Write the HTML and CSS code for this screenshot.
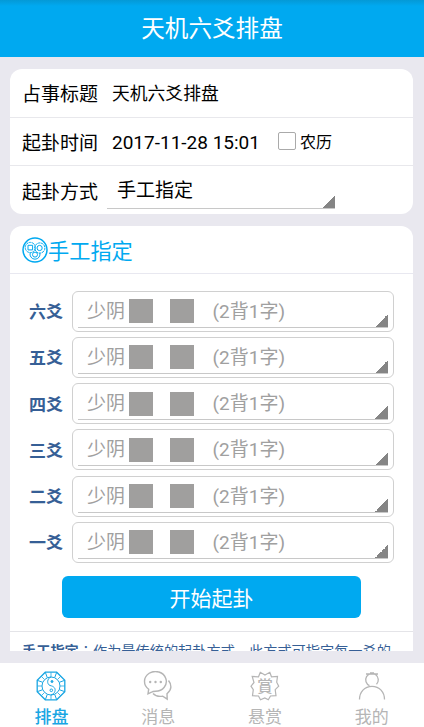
FILE: index.html
```
<!DOCTYPE html>
<html lang="zh-CN">
<head>
<meta charset="UTF-8" />
<meta name="viewport" content="width=device-width, initial-scale=1" />
<title>天机六爻排盘</title>
<link rel="stylesheet" href="styles.css">
</head>
<body>
  <header class="topbar">天机六爻排盘</header>

  <main class="content">
    <section class="card">
      <div class="row">
        <span class="label">占事标题</span>
        <span class="value title-value">天机六爻排盘</span>
      </div>
      <div class="row">
        <span class="label">起卦时间</span>
        <span class="value date-value">2017-11-28 15:01</span>
        <label class="lunar"><span class="box"></span>农历</label>
      </div>
      <div class="row">
        <span class="label">起卦方式</span>
        <span class="spinner mode">手工指定</span>
      </div>
    </section>

    <section class="card manual">
      <h2>
        <svg class="coins" viewBox="0 0 26 26" fill="none" stroke="currentColor">
          <circle cx="13" cy="13" r="12" stroke-width="1.5"/>
          <circle cx="8.3" cy="10.5" r="5.1" stroke-dasharray="2.5 .6"/>
          <circle cx="17.8" cy="11" r="5.1" stroke-dasharray="2.5 .6"/>
          <path d="M8.2 15.8a5 5 0 1 0 9.6 0"/>
          <path d="M6 8.3h4.6v4.6H6z"/>
          <circle cx="17.6" cy="11" r="2.6"/>
          <circle cx="13" cy="17.6" r="2.5"/>
        </svg>手工指定
      </h2>
      <div class="lines">
        <div class="line"><b>六爻</b><div class="field"><span class="spinner yao">少阴<i></i><i></i><em>(2背1字)</em></span></div></div>
        <div class="line"><b>五爻</b><div class="field"><span class="spinner yao">少阴<i></i><i></i><em>(2背1字)</em></span></div></div>
        <div class="line"><b>四爻</b><div class="field"><span class="spinner yao">少阴<i></i><i></i><em>(2背1字)</em></span></div></div>
        <div class="line"><b>三爻</b><div class="field"><span class="spinner yao">少阴<i></i><i></i><em>(2背1字)</em></span></div></div>
        <div class="line"><b>二爻</b><div class="field"><span class="spinner yao">少阴<i></i><i></i><em>(2背1字)</em></span></div></div>
        <div class="line"><b>一爻</b><div class="field"><span class="spinner yao">少阴<i></i><i></i><em>(2背1字)</em></span></div></div>
      </div>
      <button type="button" class="start">开始起卦</button>
      <p class="help"><b>手工指定</b><span class="colon" lang="zh-TW">：</span>作为最传统的起卦方式，此方式可指定每一爻的</p>
    </section>
  </main>

  <nav class="tabs">
    <a class="tab active">
      <svg viewBox="0 0 30 30" fill="none" stroke="currentColor">
        <path d="M9.300 1.200h11.400l8.100 8.100v11.400l-8.100 8.100H9.300l-8.100-8.100V9.300z" stroke-width="1.300"/>
        <circle cx="15" cy="15" r="9"/>
        <path d="M9.300 1.200l2 5.500M20.700 1.200l-2 5.500M28.800 9.300l-5.500 2M28.800 20.700l-5.500-2M20.700 28.800l-2-5.500M9.300 28.800l2-5.500M1.200 20.700l5.500-2M1.200 9.300l5.500 2"/>
        <path d="M15 1.500v4.500M15 24v4.500M1.500 15H6M24 15h4.500M5.500 5.500l3 3M24.500 5.500l-3 3M5.500 24.500l3-3M24.500 24.500l-3-3" opacity=".8"/>
        <path d="M15 6c-4 1.500-4.500 7-1 8.500 4 .8 6 3 4.800 6.200-.6 1.500-1.800 2.500-3.800 3.300"/>
        <circle cx="16" cy="10.500" r="1" fill="currentColor"/>
        <circle cx="15.300" cy="19.300" r="1.300"/>
      </svg>
      排盘
    </a>
    <a class="tab">
      <svg viewBox="0 0 30 30" fill="none" stroke="currentColor" stroke-width="1.400">
        <path d="M5.700 18.200A10.900 9.900 0 1 1 12.500 20.300c-2 0-3 .2-4 .9L5 22.800z"/>
        <path d="M25.500 9.500c3.200 3.800 3.700 9.200-1.500 13.200l.2 5.500-4.500-3c-4 .6-7.500-.2-9.700-2.700"/>
        <g fill="currentColor" stroke="none"><circle cx="7.200" cy="11" r="1.200"/><circle cx="12.500" cy="11" r="1.200"/><circle cx="17.800" cy="11" r="1.200"/></g>
      </svg>
      消息
    </a>
    <a class="tab">
      <svg viewBox="0 0 30 30" fill="none" stroke="currentColor" stroke-width="1.200">
        <path d="M15 4l4.800-2.700 1.700 4.500 6-.3-.8 5.700 2 4-3.500 3.500.8 6-5.500.3-2.200 3.800L14.800 27l-4.300 1.800-2-3.800-6-.3.800-6L1 15.200l3-3.700-1.800-6 6.300.3 1.800-4.500z"/>
        <text class="seal" x="15" y="20.500" text-anchor="middle">賞</text>
      </svg>
      悬赏
    </a>
    <a class="tab">
      <svg viewBox="0 0 30 30" fill="none" stroke="currentColor" stroke-width="1.300">
        <path d="M2.500 28.500c0-7.500 5-13.200 12.500-13.200s12.500 5.700 12.500 13.200"/>
        <path d="M12.500 14.600a6.300 6.300 0 1 1 7-1.400M9 3h12M13 1.800h4"/>
      </svg>
      我的
    </a>
  </nav>
</body>
</html>
```
FILE: styles.css
```
* {
  box-sizing: border-box;
}
body {
  margin: 0;
  height: 727px;
  display: flex;
  flex-direction: column;
  overflow: hidden;
  background-color: #e9e8ef;
  font-family: Roboto, "Noto Sans CJK SC", sans-serif;
  color: #000;
}

.topbar {
  flex: none;
  height: 57px;
  line-height: 59px;
  text-align: center;
  font-size: 23.6px;
  color: #fff;
  background: linear-gradient(#0499d6, #00a9f0 6px);
}

.content {
  height: 594px;
  flex: none;
  overflow: hidden;
  padding: 12px 11px 0 10px;
}

.card {
  background-color: #fff;
  border-radius: 12px;
  margin-bottom: 12px;
}

.row {
  display: flex;
  align-items: center;
  height: 48.5px;
  padding-left: 12px;
  border-bottom: 1px solid #e8e8ec;
}
.row:last-child {
  height: 48px;
  border-bottom: none;
}
.label {
  width: 90px;
  font-size: 19px;
}
.title-value {
  padding-bottom: 1px;
  font-size: 17.8px;
}
.date-value {
  width: 166px;
  padding-top: 2px;
  font-size: 19px;
}
.lunar {
  display: flex;
  align-items: center;
  gap: 4px;
  font-size: 16px;
}
.box {
  width: 18px;
  height: 18px;
  border: 1.5px solid #aaa;
  border-radius: 2px;
}

/* underlined dropdown with the small corner triangle */
.spinner {
  border-bottom: 1px solid #c8c8c8;
  background: linear-gradient(135deg, transparent 50%, #858585 50%) right bottom / 14px 14px no-repeat;
  background-origin: border-box;
}
.mode {
  width: 228px;
  height: 38px;
  line-height: 39px;
  margin-left: -5px;
  padding-left: 10px;
  font-size: 19px;
}

h2 {
  display: flex;
  align-items: center;
  height: 48px;
  margin: 0;
  padding-left: 12px;
  border-bottom: 1px solid #e8e8f0;
  font-size: 21.2px;
  font-weight: normal;
  color: #00a9f0;
}
.coins {
  width: 26px;
  height: 26px;
}

.lines {
  display: flex;
  flex-direction: column;
  gap: 5.3px;
  padding: 16.5px 19px 0;
}
.line {
  display: flex;
  align-items: center;
  height: 41px;
}
.line b {
  width: 43px;
  padding-bottom: 1px;
  font-size: 17px;
  color: #365f96;
}
.field {
  flex: 1;
  height: 41px;
  padding: 4px 5px;
  border: 1px solid #d0d0d0;
  border-radius: 6px;
}
.yao {
  display: flex;
  align-items: center;
  height: 32px;
  padding-left: 9px;
  font-size: 19px;
  line-height: 31px;
  color: #a0a0a0;
}
.yao i {
  width: 24px;
  height: 24px;
  margin-left: 4px;
  background-color: #a09f9e;
}
.yao i + i {
  margin-left: 17px;
}
.yao em {
  margin-left: 18.5px;
  font-style: normal;
}

.start {
  display: block;
  width: 299px;
  height: 42px;
  margin: 13.5px 0 13px 52px;
  padding: 0;
  border: none;
  border-radius: 6px;
  background-color: #00a9f0;
  color: #fff;
  font-family: inherit;
  font-size: 21px;
}

.help {
  margin: 0;
  padding: 8px 12px;
  border-top: 1px solid #e4e4e8;
  font-size: 14.2px;
  line-height: 20px;
  color: #365f96;
  white-space: nowrap;
}
.colon {
  font-family: "Noto Sans CJK TC", sans-serif;
}

.tabs {
  flex: none;
  display: flex;
  height: 64px;
  margin: 12px 0 0 -2px;
  background-color: #fff;
}
.tab {
  flex: none;
  width: 106.8px;
  display: flex;
  flex-direction: column;
  align-items: center;
  padding-top: 8px;
  font-size: 17px;
  line-height: 32px;
  color: #b5b5b5;
}
.tab svg {
  flex: none;
  width: 30px;
  height: 30px;
}
.active {
  font-weight: 500;
  color: #19a6e3;
}
.seal {
  font-size: 16px;
  font-weight: 500;
  fill: currentColor;
  stroke: none;
}
```
